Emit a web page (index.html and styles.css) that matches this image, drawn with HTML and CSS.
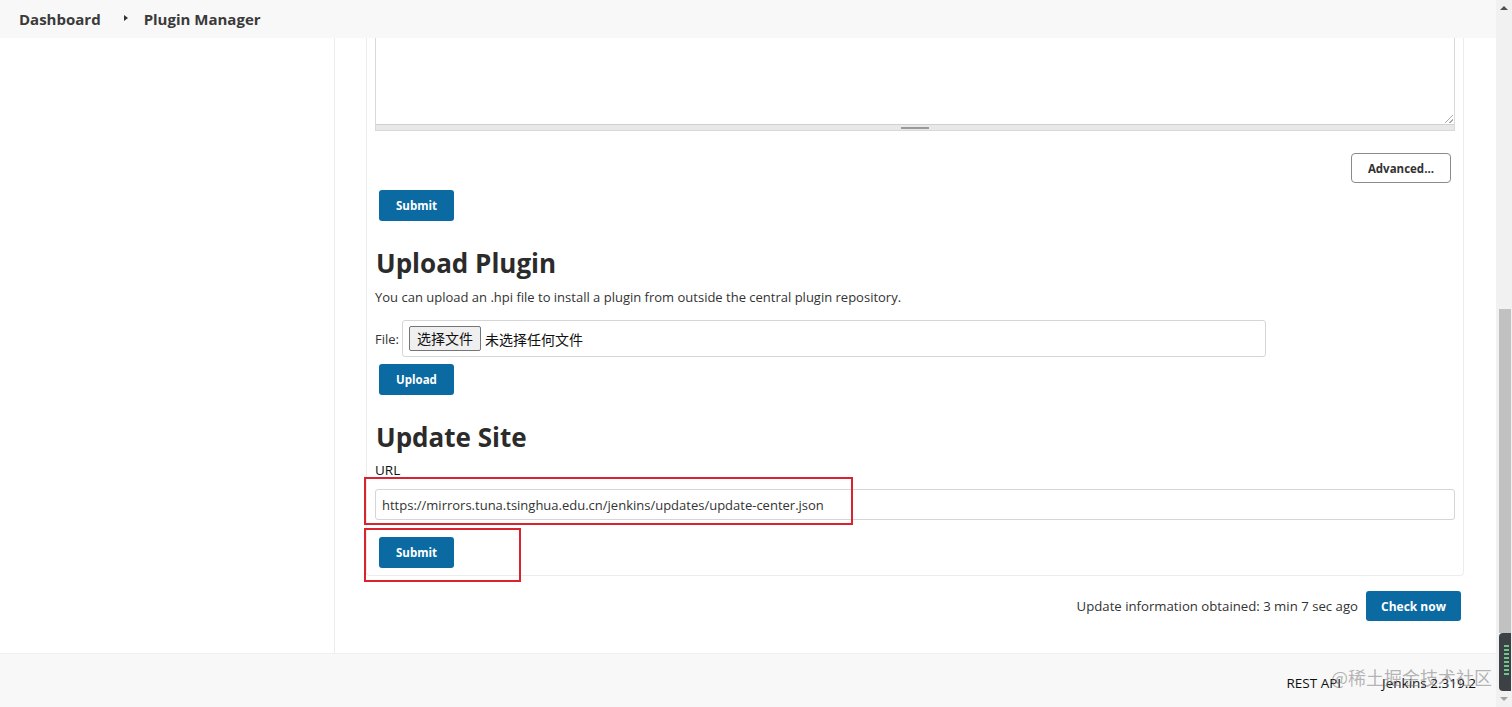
FILE: index.html
```html
<!DOCTYPE html>
<html lang="en">
<head>
  <meta charset="UTF-8">
  <title>Plugin Manager [Jenkins]</title>
  <link rel="stylesheet" href="styles.css">
</head>
<body>
  <div class="window">
    <div class="page">
      <header class="breadcrumbs">
        <a href="#" class="crumb">Dashboard</a>
        <span class="crumb-arrow"></span>
        <a href="#" class="crumb">Plugin Manager</a>
      </header>

      <div class="page-body">
        <aside class="side-panel"></aside>

        <main class="main-panel">
          <div class="tab-box">
            <div class="fake-textarea">
              <div class="textarea-space"></div>
              <div class="textarea-scroll"><span class="textarea-thumb"></span></div>
              <span class="resize-grip"></span>
            </div>

            <div class="advanced-row">
              <button class="btn-secondary">Advanced...</button>
            </div>
            <button class="btn">Submit</button>

            <h1>Upload Plugin</h1>
            <p class="description">You can upload an .hpi file to install a plugin from outside the central plugin repository.</p>

            <div class="file-row">
              <label>File:</label>
              <div class="file-input">
                <span class="file-btn">选择文件</span>
                <span class="file-name">未选择任何文件</span>
              </div>
            </div>
            <button class="btn">Upload</button>

            <h1 class="second">Update Site</h1>
            <div class="field-label">URL</div>
            <div class="url-field">
              <input type="text" class="url-input" value="https://mirrors.tuna.tsinghua.edu.cn/jenkins/updates/update-center.json">
              <span class="mark mark-url"></span>
            </div>
            <div class="submit-wrap">
              <button class="btn">Submit</button>
              <span class="mark mark-submit"></span>
            </div>
          </div>

          <div class="update-info">
            <span>Update information obtained: 3 min 7 sec ago</span>
            <button class="btn btn-check">Check now</button>
          </div>
        </main>
      </div>

      <footer class="page-footer">
        <a href="#">REST API</a>
        <a href="#">Jenkins 2.319.2</a>
        <span class="watermark">@稀土掘金技术社区</span>
      </footer>
    </div>

    <div class="scrollbar">
      <span class="arrow-up"></span>
      <div class="scroll-space"></div>
      <div class="scroll-thumb"></div>
      <div class="scroll-widget">
        <span></span><span></span><span></span><span></span><span></span><span></span><span></span><span></span>
      </div>
      <span class="arrow-down"></span>
    </div>
  </div>
</body>
</html>
```

FILE: styles.css
```css
* {
  box-sizing: border-box;
}

html, body {
  margin: 0;
  padding: 0;
  height: 100%;
  overflow: hidden;
}

body {
  font-family: "Open Sans", "Noto Sans CJK SC", sans-serif;
  font-size: 13px;
  color: #333;
  background-color: #fff;
}

.window {
  display: flex;
  height: 707px;
}

.page {
  flex: 1;
  display: flex;
  flex-direction: column;
}

/* header */

.breadcrumbs {
  height: 38px;
  display: flex;
  align-items: center;
  padding-left: 19px;
  background-color: #f8f8f8;
}

.crumb {
  color: #3a3a3a;
  font-weight: bold;
  font-size: 15px;
  text-decoration: none;
}

.crumb-arrow {
  width: 0;
  height: 0;
  margin: 0 16px 2px 23px;
  border-left: 4px solid #333;
  border-top: 3.5px solid transparent;
  border-bottom: 3.5px solid transparent;
}

.page-body {
  flex: 1;
  display: flex;
}

.side-panel {
  width: 335px;
  border-right: 1px solid #ececec;
}

.main-panel {
  flex: 1;
  padding: 0 32px 0 31px;
}

.tab-box {
  border: 1px solid #ececec;
  border-top: none;
  border-radius: 0 0 4px 4px;
  padding: 0 8px 7px 8px;
}

/* textarea cut by the header */

.fake-textarea {
  position: relative;
  height: 93px;
  border: 1px solid #d9d9d9;
  border-top: none;
  display: flex;
  flex-direction: column;
}

.textarea-space {
  flex: 1;
}

.textarea-scroll {
  height: 6px;
  background-color: #e8e8e8;
  border-top: 1px solid #d0d0d0;
  display: flex;
  justify-content: center;
  align-items: center;
}

.textarea-thumb {
  width: 28px;
  height: 2px;
  background-color: #999;
}

.resize-grip {
  position: absolute;
  right: 1px;
  bottom: 7px;
  width: 8px;
  height: 8px;
  background: linear-gradient(135deg, transparent 45%, #aaa 45%, #aaa 55%, transparent 55%, transparent 72%, #aaa 72%, #aaa 82%, transparent 82%);
}

.advanced-row {
  display: flex;
  justify-content: flex-end;
  margin-top: 22px;
  padding-right: 4px;
}

.btn-secondary {
  height: 30px;
  padding: 0 16px;
  border: 1px solid #8a8a8a;
  border-radius: 4px;
  background-color: #fff;
  color: #333;
  font-family: "Open Sans", sans-serif;
  font-weight: bold;
  font-size: 11.5px;
  cursor: pointer;
}

.btn {
  display: block;
  width: 75px;
  height: 31px;
  margin: 7px 0 0 4px;
  padding: 0;
  border: none;
  border-radius: 3px;
  background-color: #0b6aa2;
  color: #fff;
  font-family: "Open Sans", sans-serif;
  font-weight: bold;
  font-size: 11.5px;
  cursor: pointer;
}

h1 {
  margin: 24px 0 0 1px;
  font-size: 26px;
  line-height: 36px;
  font-weight: bold;
  color: #2b2b2b;
}

h1.second {
  margin-top: 24px;
}

.description {
  margin: 6px 0 0 0;
  line-height: 20px;
}

.file-row {
  display: flex;
  align-items: center;
  margin-top: 13px;
}

.file-row label {
  margin-right: 3px;
}

.file-input {
  width: 864px;
  height: 37px;
  display: flex;
  align-items: center;
  padding-left: 6px;
  border: 1px solid #d5d5d5;
  border-radius: 3px;
  font-family: "Noto Sans CJK SC", sans-serif;
  font-size: 14px;
}

.file-btn {
  height: 25px;
  line-height: 23px;
  padding: 0 7px;
  margin-right: 4px;
  border: 1px solid #767676;
  border-radius: 2px;
  background-color: #efefef;
  color: #111;
}

.file-name {
  color: #111;
}

.field-label {
  margin-top: 5px;
  line-height: 20px;
  font-size: 13.5px;
  color: #111;
}

.url-field {
  position: relative;
  margin-top: 9px;
}

.url-input {
  display: block;
  width: 100%;
  height: 31px;
  padding: 0 6px;
  border: 1px solid #d5d5d5;
  border-radius: 3px;
  font-family: "Open Sans", sans-serif;
  font-size: 13px;
  color: #333;
}

.submit-wrap {
  position: relative;
  margin-top: 17px;
}

.submit-wrap .btn {
  margin-top: 0;
}

/* red annotation frames */

.mark {
  position: absolute;
  border: 2px solid #d9242f;
  pointer-events: none;
}

.mark-url {
  left: -11px;
  top: -12px;
  width: 489px;
  height: 48px;
}

.mark-submit {
  left: -11px;
  top: -9px;
  width: 157px;
  height: 54px;
}

.update-info {
  display: flex;
  justify-content: flex-end;
  align-items: center;
  margin-top: 15px;
  padding-right: 3px;
  font-size: 13.2px;
}

.update-info .btn {
  margin: 0 0 0 8px;
}

.btn-check {
  width: 95px;
  height: 30px;
  font-size: 12px;
}

/* footer */

.page-footer {
  position: relative;
  height: 54px;
  display: flex;
  justify-content: flex-end;
  align-items: center;
  gap: 41px;
  padding: 4px 20px 0 0;
  background-color: #f8f8f8;
  border-top: 1px solid #f0f0f0;
}

.page-footer a {
  color: #111;
  text-decoration: none;
  font-size: 13.5px;
}

.watermark {
  position: absolute;
  right: 4px;
  top: 10px;
  font-family: "Noto Sans CJK SC", sans-serif;
  font-size: 18px;
  color: rgba(120, 120, 120, 0.55);
}

/* browser scrollbar */

.scrollbar {
  width: 16px;
  display: flex;
  flex-direction: column;
  align-items: center;
  background-color: #f1f1f1;
}

.arrow-up,
.arrow-down {
  width: 0;
  height: 0;
  margin: 6px 0;
  border-left: 4px solid transparent;
  border-right: 4px solid transparent;
}

.arrow-up {
  border-bottom: 4px solid #505050;
}

.arrow-down {
  margin-top: 6px;
  border-top: 4px solid #a3a3a3;
}

.scroll-space {
  height: 294px;
}

.scroll-thumb {
  width: 12px;
  height: 325px;
  margin-left: 2px;
  background-color: #c1c1c1;
}

.scroll-widget {
  width: 12px;
  height: 58px;
  margin-left: 2px;
  padding: 12px 0 0 5px;
  border-radius: 4px 0 0 4px;
  background-color: #3c4146;
  display: flex;
  flex-direction: column;
  gap: 2px;
}

.scroll-widget span {
  width: 5px;
  height: 2px;
  background-color: #6fc48a;
}
```
